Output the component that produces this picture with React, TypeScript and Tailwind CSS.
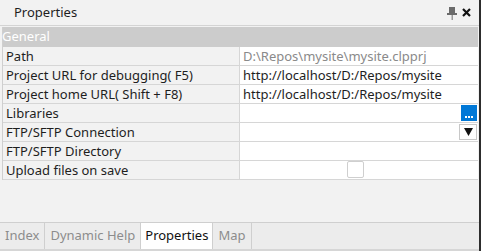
const rows: { label: string; value?: string; muted?: boolean; kind?: "ellipsis" | "dropdown" | "checkbox" }[] = [
  { label: "Path", value: "D:\\Repos\\mysite\\mysite.clpprj", muted: true },
  { label: "Project URL for debugging( F5)", value: "http://localhost/D:/Repos/mysite" },
  { label: "Project home URL( Shift + F8)", value: "http://localhost/D:/Repos/mysite" },
  { label: "Libraries", kind: "ellipsis" },
  { label: "FTP/SFTP Connection", kind: "dropdown" },
  { label: "FTP/SFTP Directory" },
  { label: "Upload files on save", kind: "checkbox" },
];

const tabs = ["Index", "Dynamic Help", "Properties", "Map"];

export default function App() {
  return (
    <div
      className="flex h-[251px] w-[481px] flex-col border-r-2 border-r-[#2d2d2d] bg-[#f2f2f2] text-[13px] text-[#1e1e1e]"
      style={{ fontFamily: '"Noto Sans", "Open Sans", sans-serif' }}
    >
      <div className="flex h-[26px] items-center border-b border-[#d4d4d4] pl-[14px] pr-[8px]">
        <span className="flex-1 leading-none">Properties</span>
        <svg width="10" height="14" viewBox="0 0 10 14" className="mr-[5px]">
          <rect x="2" y="1" width="6" height="7" fill="#6b6b6b" />
          <rect x="0" y="7" width="10" height="2" fill="#6b6b6b" />
          <rect x="4.5" y="9" width="1.5" height="5" fill="#9a9a9a" />
        </svg>
        <svg width="9" height="9" viewBox="0 0 9 9">
          <path d="M1 1L8 8M8 1L1 8" stroke="#111" strokeWidth="2.2" />
        </svg>
      </div>

      <div className="ml-[2px] mr-[1px] mt-px border-l border-[#cfcfcf]">
        <div className="flex h-[20px] items-center bg-[#cccccc] text-white">
          <span className="-ml-px">General</span>
        </div>
        {rows.map((r) => (
          <div key={r.label} className="flex h-[19px] border-b border-[#d6d6d6] bg-white">
            <div className="flex w-[237px] items-center border-r border-[#d6d6d6] bg-[#f2f2f2] pl-[3px] leading-none">
              {r.label}
            </div>
            <div className="relative flex flex-1 items-center pl-[3px] leading-none">
              {r.value && <span className={r.muted ? "text-[#8a8a8a]" : ""}>{r.value}</span>}
              {r.kind === "ellipsis" && (
                <div className="absolute right-[1px] top-[1px] flex h-[16px] w-[16px] items-end justify-center bg-[#0078d7] pb-[3px]">
                  <div className="flex gap-[1px]">
                    <span className="h-[2px] w-[2px] bg-white" />
                    <span className="h-[2px] w-[2px] bg-white" />
                    <span className="h-[2px] w-[2px] bg-white" />
                  </div>
                </div>
              )}
              {r.kind === "dropdown" && (
                <div className="absolute right-[1px] top-[1px] flex h-[16px] w-[18px] items-center justify-center border border-[#c8c8c8] bg-white">
                  <svg width="9" height="8" viewBox="0 0 9 8">
                    <path d="M0 0H9L4.5 8Z" fill="#111" />
                  </svg>
                </div>
              )}
              {r.kind === "checkbox" && (
                <div className="ml-[104px] mt-[-2px] h-[17px] w-[17px] rounded-[2px] border border-[#cfcfcf] bg-white" />
              )}
            </div>
          </div>
        ))}
      </div>

      <div className="flex-1" />

      <div className="flex h-[29px] border-t border-[#cfcfcf] border-b-2 border-b-[#d6d6d6] bg-[#ececec]">
        {tabs.map((t) => (
          <div
            key={t}
            className={
              t === "Properties"
                ? "flex items-center border-r border-[#cfcfcf] bg-white px-[4px] text-[#111]"
                : "flex items-center border-r border-[#cfcfcf] px-[5px] text-[#8c8c8c]"
            }
          >
            {t}
          </div>
        ))}
      </div>
    </div>
  );
}
